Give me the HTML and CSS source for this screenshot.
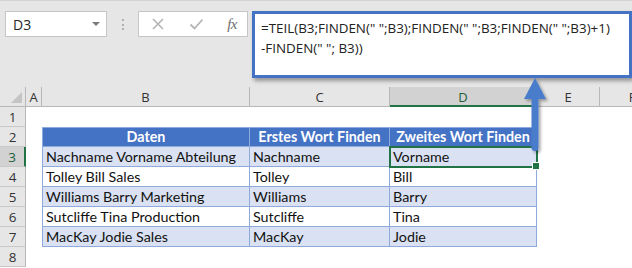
FILE: index.html
```html
<!DOCTYPE html>
<html>
<head>
<meta charset="utf-8">
<link rel="stylesheet" href="styles.css">
</head>
<body>
<div class="app">
  <div class="toolbar">
    <div class="namebox">
      <span class="name">D3</span>
      <span class="caret"></span>
    </div>
    <div class="dots"><i></i><i></i><i></i></div>
    <div class="fbuttons">
      <svg class="ico" width="14" height="14" viewBox="0 0 14 14"><path d="M2 2 L12 12 M12 2 L2 12" stroke="#b4b4b4" stroke-width="1.6" fill="none"/></svg>
      <svg class="ico" width="15" height="14" viewBox="0 0 15 14"><path d="M1.5 7.5 L5.5 11.5 L13.5 2.5" stroke="#b4b4b4" stroke-width="1.8" fill="none"/></svg>
      <span class="fx">fx</span>
    </div>
    <div class="formula">
      <div>=TEIL(B3;FINDEN(" ";B3);FINDEN(" ";B3;FINDEN(" ";B3)+1)</div>
      <div>-FINDEN(" "; B3))</div>
    </div>
  </div>
  <div class="grid">
    <div class="ch corner"></div>
    <div class="ch">A</div>
    <div class="ch">B</div>
    <div class="ch">C</div>
    <div class="ch sel">D</div>
    <div class="ch">E</div>
    <div class="ch last">F</div>

    <div class="rh">1</div><div></div><div></div><div></div><div></div><div></div><div></div>

    <div class="rh">2</div><div></div>
    <div class="t th first">Daten</div>
    <div class="t th">Erstes Wort Finden</div>
    <div class="t th">Zweites Wort Finden</div>
    <div></div><div></div>

    <div class="rh selr">3</div><div></div>
    <div class="t band first">Nachname Vorname Abteilung</div>
    <div class="t band">Nachname</div>
    <div class="t band active">Vorname</div>
    <div></div><div></div>

    <div class="rh">4</div><div></div>
    <div class="t first">Tolley Bill Sales</div>
    <div class="t">Tolley</div>
    <div class="t">Bill</div>
    <div></div><div></div>

    <div class="rh">5</div><div></div>
    <div class="t band first">Williams Barry Marketing</div>
    <div class="t band">Williams</div>
    <div class="t band">Barry</div>
    <div></div><div></div>

    <div class="rh">6</div><div></div>
    <div class="t first">Sutcliffe Tina Production</div>
    <div class="t">Sutcliffe</div>
    <div class="t">Tina</div>
    <div></div><div></div>

    <div class="rh">7</div><div></div>
    <div class="t band first">MacKay Jodie Sales</div>
    <div class="t band">MacKay</div>
    <div class="t band">Jodie</div>
    <div></div><div></div>

    <div class="rh">8</div><div></div><div></div><div></div><div></div><div></div><div></div>
  </div>
  <svg class="arrow" width="40" height="84" viewBox="0 0 40 84">
    <defs>
      <filter id="sh" x="-50%" y="-20%" width="200%" height="150%">
        <feDropShadow dx="2" dy="2" stdDeviation="1.5" flood-color="#000" flood-opacity="0.35"/>
      </filter>
    </defs>
    <g filter="url(#sh)" fill="#4a7ccb">
      <rect x="11.5" y="18" width="7" height="57" rx="3.5"/>
      <polygon points="15,2 4,23 26,23"/>
    </g>
  </svg>
</div>
</body>
</html>
```
FILE: styles.css
```css
* { box-sizing: border-box; }
html, body { margin: 0; padding: 0; }
body { background: #fff; width: 632px; height: 268px; overflow: hidden; }
.app { position: relative; width: 632px; height: 268px; overflow: hidden; }

.toolbar {
  height: 87px;
  background: #e6e6e6;
  border-top: 1px solid #d4d4d4;
  display: flex;
  align-items: flex-start;
  padding: 10px 0 0 5px;
  font-family: "Open Sans", sans-serif;
}
.namebox {
  width: 102px; height: 26px;
  background: #fff;
  border: 1px solid #c6c6c6;
  display: flex; align-items: center; justify-content: space-between;
  padding: 0 6px 0 7px;
}
.name { font-size: 14px; color: #262626; }
.caret {
  width: 0; height: 0;
  border-left: 4px solid transparent;
  border-right: 4px solid transparent;
  border-top: 4px solid #7a7a7a;
  margin-top: -1px;
}
.dots {
  width: 31px; height: 26px;
  display: flex; flex-direction: column; align-items: center; justify-content: center; gap: 2.5px;
  padding-top: 1px;
}
.dots i { display: block; width: 2px; height: 2px; background: #b0b0b0; }
.fbuttons {
  width: 110px; height: 26px;
  background: #fff;
  border: 1px solid #c6c6c6;
  display: flex; align-items: center; justify-content: space-between;
  padding: 0 10px 0 12px;
}
.fx {
  font-family: "Liberation Serif", serif;
  font-style: italic;
  font-size: 15px;
  color: #6e6e6e;
  letter-spacing: -0.5px;
}
.formula {
  margin-left: 4px;
  width: 380px; height: 67px;
  background: #fff;
  border: 3px solid #4472c4;
  box-shadow: 2px 3px 4px rgba(0,0,0,0.35);
  padding: 4px 7px 4px 6px;
  font-family: "Open Sans", sans-serif;
  font-size: 13.4px;
  line-height: 20px;
  color: #222;
  white-space: nowrap;
}

.grid {
  display: grid;
  grid-template-columns: 26px 16px 208px 140px 147px 63px 64px;
  grid-template-rows: repeat(9, 20px);
  font-family: "Lato", sans-serif;
}
.ch {
  background: #e6e6e6;
  border-right: 1px solid #b8b8b8;
  border-bottom: 1px solid #b8b8b8;
  display: flex; align-items: center; justify-content: center;
  font-family: "Open Sans", sans-serif;
  font-size: 13px; color: #333;
  padding-top: 1px;
}
.ch.last { border-right: none; }
.ch.sel { background: #d2d2d2; border-bottom: 2px solid #217346; color: #1f5f3a; }
.corner { position: relative; }
.corner::after {
  content: ""; position: absolute; right: 3px; bottom: 3px;
  width: 0; height: 0;
  border-left: 11px solid transparent;
  border-bottom: 11px solid #c4c4c4;
}
.rh {
  background: #e6e6e6;
  border-right: 1px solid #b8b8b8;
  border-bottom: 1px solid #c8c8c8;
  display: flex; align-items: center; justify-content: center;
  font-family: "Open Sans", sans-serif;
  font-size: 13.5px; color: #333;
}
.rh.selr { background: #d2d2d2; border-right: 2px solid #217346; color: #1f5f3a; }

.t {
  border-right: 1px solid #8eaadb;
  border-bottom: 1px solid #8eaadb;
  font-size: 14.3px;
  line-height: 19px;
  padding-left: 3px;
  color: #111;
  white-space: nowrap;
  overflow: hidden;
}
.t.first { border-left: 1px solid #8eaadb; }
.th {
  background: #4472c4;
  border-top: 1px solid #8eaadb;
  color: #fff;
  font-weight: bold;
  text-align: center;
  padding-left: 0;
  line-height: 18px;
}
.band { background: #d9e1f2; }
.active {
  position: relative;
  outline: 2px solid #217346;
  outline-offset: -1px;
  z-index: 1;
  overflow: visible;
}
.active::after {
  content: ""; position: absolute;
  right: -4px; bottom: -4px;
  width: 6px; height: 6px;
  background: #217346;
  border: 1px solid #fff;
}

.arrow { position: absolute; left: 520px; top: 76px; z-index: 5; }
```
